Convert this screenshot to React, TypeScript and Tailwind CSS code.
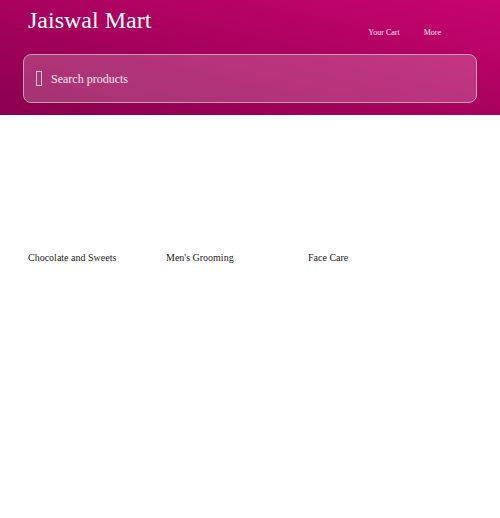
import React from "react";

const categories = [
  { name: "Chocolate and Sweets", w: "w-[138px]" },
  { name: "Men's Grooming", w: "w-[142px]" },
  { name: "Face Care", w: "w-[142px]" },
];

export default function App() {
  return (
    <div className="min-h-[518px] bg-white font-['Liberation_Serif',serif]">
      <header className="h-[115px] bg-gradient-to-tr from-[#8a004d] to-[#c8046f] px-[23px] pt-[6px]">
        <div className="flex items-start justify-between">
          <h1 className="pl-[5px] text-[24px] leading-[28px] text-white">Jaiswal Mart</h1>
          <nav className="mt-[22px] mr-[36px] flex gap-[24px] text-[8px] leading-[10px] text-white/90">
            <span>Your Cart</span>
            <span>More</span>
          </nav>
        </div>
        <div className="mt-[16px] flex h-[49px] items-center gap-[9px] rounded-[8px] border border-[#b9a5ad] bg-white/20 px-[12px]">
          <span className="h-[15px] w-[6px] border border-white/70" />
          <span className="text-[12px] text-white/90">Search products</span>
        </div>
      </header>
      <section className="flex px-[28px] pt-[137px]">
        {categories.map((c) => (
          <div key={c.name} className={c.w}>
            <p className="text-[10px] leading-[12px] text-[#222]">{c.name}</p>
          </div>
        ))}
      </section>
    </div>
  );
}
